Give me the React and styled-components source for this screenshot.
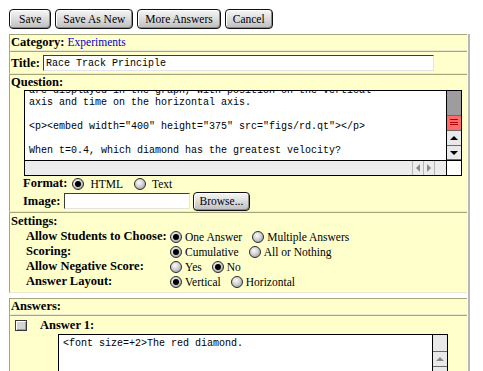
import React from 'react';
import styled, { createGlobalStyle, css } from 'styled-components';

const serif = `"Liberation Serif", "Times New Roman", serif`;
const mono = `"Liberation Mono", "Courier New", monospace`;

const GlobalStyle = createGlobalStyle`
  html, body {
    margin: 0;
    background: #fff;
    overflow: hidden;
  }
  body {
    padding: 9px 0 0 9px;
    font-family: ${serif};
    font-size: 11.5px;
    color: #000;
  }
`;

const Toolbar = styled.div`
  display: flex;
  gap: 4px;
  height: 20px;
  margin-bottom: 5px;
`;

const Button = styled.button`
  height: ${p => p.$h || 20}px;
  padding: 0 ${p => p.$pad ?? 7}px;
  font-family: ${serif};
  font-size: 11.5px;
  color: #000;
  border: 1px solid #111;
  border-radius: 4px;
  background: linear-gradient(#f7f7f7, #d6d6d6 60%, #bdbdbd);
  box-shadow: inset 1px 1px 0 #fff, inset -1px -1px 0 #8a8a8a;
  cursor: pointer;
`;

const Form = styled.div`
  width: 458px;
  padding-right: 1px;
  border-right: 2px solid #b8b8b8;
`;

const Section = styled.div`
  background: #ffffcc;
  border: 1px solid #a5a57b;
  border-right: none;
  border-bottom-color: #ecebd2;
  margin-top: ${p => p.$gap || 0}px;
`;

const Heading = styled.div`
  font-weight: bold;
  font-size: 12.5px;
  line-height: ${p => p.$lh || 15}px;
  padding-left: 1px;
`;

const Link = styled.a`
  font-weight: normal;
  font-size: 11.5px;
  color: #0000cc;
  text-decoration: none;
`;

const FieldRow = styled.div`
  display: flex;
  align-items: center;
  box-sizing: border-box;
  gap: ${p => p.$gap ?? 3}px;
  height: ${p => p.$h || 15}px;
  padding: ${p => p.$pad || '0 0 0 1px'};
`;

const Label = styled.span`
  font-weight: bold;
  font-size: 12.5px;
`;

const Field = styled.input`
  width: ${p => p.$w}px;
  height: 16px;
  box-sizing: border-box;
  border: 1px solid;
  border-color: #3c3c3c #e4e4e4 #e4e4e4 #3c3c3c;
  background: #fff;
  font-family: ${mono};
  font-size: 10px;
  padding: 0 2px;
  outline: none;
`;

const TextBox = styled.div`
  display: grid;
  grid-template-columns: 1fr 15px;
  grid-template-rows: ${p => p.$rows};
  width: ${p => p.$w}px;
  box-sizing: border-box;
  margin-left: ${p => p.$indent}px;
  border: 1px solid #000;
  border-bottom: ${p => (p.$open ? 'none' : '1px solid #000')};
  background: #fff;
`;

const CodeWrap = styled.div`
  overflow: hidden;
`;

const Code = styled.pre`
  margin: ${p => p.$offset || 0}px 0 0;
  padding: ${p => p.$top || 0}px 4px 0;
  font-family: ${mono};
  font-size: 10px;
  line-height: 12px;
  white-space: pre;
`;

const VScroll = styled.div`
  display: flex;
  flex-direction: column;
  border-left: 1px solid #000;
  background: #e9e9e9;
`;

const Thumb = styled.div`
  height: ${p => p.$h}px;
  flex: none;
  background: ${p => p.$bg || '#9d9d9d'};
  border-bottom: 1px solid #6a6a6a;
`;

const Grip = styled.div`
  height: 14px;
  flex: none;
  background-color: #ff6a6a;
  background-image: repeating-linear-gradient(#b40000 0 1px, transparent 1px 2.5px);
  background-size: 8px 8px;
  background-position: center;
  background-repeat: no-repeat;
  border-bottom: 1px solid #6a6a6a;
`;

const Arrow = styled.div`
  height: ${p => p.$h || 13}px;
  flex: none;
  display: flex;
  align-items: center;
  justify-content: center;
  border-bottom: 1px solid #6a6a6a;
  background: #e9e9e9;

  &::after {
    content: '';
    border-left: 4px solid transparent;
    border-right: 4px solid transparent;
    ${p =>
      p.$dir === 'up'
        ? css`border-bottom: 4px solid ${p.$dim ? '#8a8a8a' : '#000'};`
        : css`border-top: 4px solid ${p.$dim ? '#8a8a8a' : '#000'};`}
  }
`;

const HScroll = styled.div`
  display: flex;
  justify-content: flex-end;
  padding-right: 11px;
  border-top: 1px solid #000;
  background: #ececec;
`;

const HArrow = styled.div`
  width: 10px;
  display: flex;
  align-items: center;
  justify-content: center;
  border-left: 1px solid #b5b5b5;
  &:last-child {
    border-right: 1px solid #b5b5b5;
  }

  &::after {
    content: '';
    border-top: 4px solid transparent;
    border-bottom: 4px solid transparent;
    ${p =>
      p.$dir === 'left'
        ? css`border-right: 4px solid #8a8a8a;`
        : css`border-left: 4px solid #8a8a8a;`}
  }
`;

const Corner = styled.div`
  border-top: 1px solid #000;
  border-left: 1px solid #000;
  background: #fff;
`;

const Radio = styled.span`
  display: inline-flex;
  align-items: center;
  justify-content: center;
  flex: none;
  width: 12px;
  height: 12px;
  box-sizing: border-box;
  border-radius: 50%;
  border: 1px solid #2a2a2a;
  background: radial-gradient(circle at 40% 35%, #fbfbfb 0, #d2d2d2 45%, #8c8c8c 100%);

  &::after {
    content: '';
    width: 6px;
    height: 6px;
    border-radius: 50%;
    background: ${p => (p.$on ? '#000' : 'transparent')};
  }
`;

const Options = styled.div`
  display: flex;
  align-items: center;
  gap: ${p => p.$gap ?? 10}px;
`;

const Option = styled.label`
  display: flex;
  align-items: center;
  gap: ${p => p.$gap ?? 3}px;
  font-size: 11.5px;
`;

const SettingsGrid = styled.div`
  display: grid;
  grid-template-columns: 144px auto;
  grid-auto-rows: 15px;
  align-items: center;
  padding: 0 0 3px 16px;
`;

const Checkbox = styled.span`
  width: 12px;
  height: 11px;
  box-sizing: border-box;
  flex: none;
  border: 1px solid #3a3a3a;
  background: #d4d4d4;
  box-shadow: inset 1px 1px 0 #fff, inset -1px -1px 0 #9a9a9a;
`;

const AnswerHead = styled.div`
  display: flex;
  align-items: center;
  gap: 13px;
  height: 18px;
  padding-left: 5px;
`;

function Choice({ options, selected, gap, inner }) {
  return (
    <Options $gap={gap}>
      {options.map(o => (
        <Option key={o} $gap={inner}>
          <Radio $on={o === selected} />
          {o}
        </Option>
      ))}
    </Options>
  );
}

const settings = [
  { label: 'Allow Students to Choose:', options: ['One Answer', 'Multiple Answers'], selected: 'One Answer' },
  { label: 'Scoring:', options: ['Cumulative', 'All or Nothing'], selected: 'Cumulative' },
  { label: 'Allow Negative Score:', options: ['Yes', 'No'], selected: 'No' },
  { label: 'Answer Layout:', options: ['Vertical', 'Horizontal'], selected: 'Vertical' },
];

const questionText = `are displayed in the graph, with position on the vertical
axis and time on the horizontal axis.

<p><embed width="400" height="375" src="figs/rd.qt"></p>

When t=0.4, which diamond has the greatest velocity?`;

export default function App() {
  return (
    <>
      <GlobalStyle />
      <Toolbar>
        <Button $pad={9}>Save</Button>
        <Button>Save As New</Button>
        <Button>More Answers</Button>
        <Button>Cancel</Button>
      </Toolbar>

      <Form>
        <Section>
          <Heading>
            Category: <Link href="#">Experiments</Link>
          </Heading>
        </Section>

        <Section>
          <FieldRow $h={21} $pad="3px 0 2px 1px">
            <Label>Title:</Label>
            <Field $w={391} readOnly value="Race Track Principle" />
          </FieldRow>
        </Section>

        <Section>
          <Heading>Question:</Heading>
          <TextBox $w={438} $indent={14} $rows="69px 15px">
            <CodeWrap>
              <Code $offset={-6}>{questionText}</Code>
            </CodeWrap>
            <VScroll>
              <Thumb $h={24} />
              <Grip />
              <Arrow $dir="up" $h={14} />
              <Arrow $dir="down" />
            </VScroll>
            <HScroll>
              <HArrow $dir="left" />
              <HArrow $dir="right" />
            </HScroll>
            <Corner />
          </TextBox>
          <FieldRow $pad="0 0 0 13px" $gap={5}>
            <Label>Format:</Label>
            <Choice options={['HTML', 'Text']} selected="HTML" gap={11} inner={6} />
          </FieldRow>
          <FieldRow $h={20} $pad="0 0 0 13px" $gap={3}>
            <Label>Image:</Label>
            <Field $w={126} readOnly value="" />
            <Button $h={19} $pad={6}>Browse...</Button>
          </FieldRow>
        </Section>

        <Section>
          <Heading $lh={16}>Settings:</Heading>
          <SettingsGrid>
            {settings.map(s => (
              <React.Fragment key={s.label}>
                <Label>{s.label}</Label>
                <Choice options={s.options} selected={s.selected} />
              </React.Fragment>
            ))}
          </SettingsGrid>
        </Section>

        <Section $gap={5}>
          <Heading>Answers:</Heading>
        </Section>

        <Section>
          <AnswerHead>
            <Checkbox />
            <Label>Answer 1:</Label>
          </AnswerHead>
          <TextBox $w={390} $indent={48} $rows="60px" $open>
            <CodeWrap>
              <Code $top={3}>{'<font size=+2>The red diamond.'}</Code>
            </CodeWrap>
            <VScroll>
              <Thumb $h={16} $bg="#e9e9e9" />
              <Arrow $dir="up" $h={14} $dim />
              <Arrow $dir="down" $dim />
            </VScroll>
          </TextBox>
        </Section>
      </Form>
    </>
  );
}
